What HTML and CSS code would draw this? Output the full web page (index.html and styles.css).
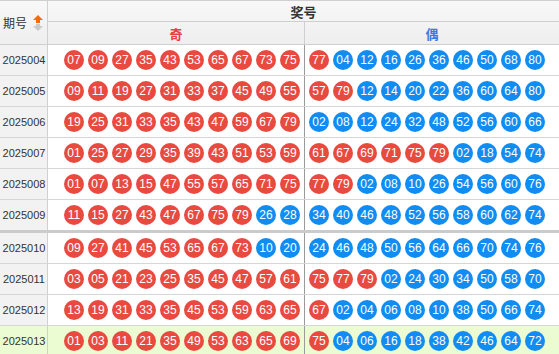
FILE: index.html
```html
<!DOCTYPE html>
<html lang="zh">
<head>
<meta charset="utf-8">
<title>奖号奇偶分布</title>
<link rel="stylesheet" href="styles.css">
</head>
<body>
<div class="tbl">
  <div class="head">
    <div class="h-period">期号
      <svg class="sort" width="10" height="16" viewBox="0 0 10 16">
        <polygon points="5,0 10,5 7,5 7,8 3,8 3,5 0,5" fill="#f36a10"/>
        <polygon points="3,9 7,9 7,11 10,11 5,16 0,11 3,11" fill="#c9c9c9"/>
      </svg>
    </div>
    <div class="h-prize">奖号</div>
    <div class="h-odd">奇</div>
    <div class="h-even">偶</div>
  </div>
  <div id="body"></div>
</div>
<script>
const data = [
  ["2025004","07 09 27 35 43 53 65 67 73 75","77 04 12 16 26 36 46 50 68 80"],
  ["2025005","09 11 19 27 31 33 37 45 49 55","57 79 12 14 20 22 36 60 64 80"],
  ["2025006","19 25 31 33 35 43 47 59 67 79","02 08 12 24 32 48 52 56 60 66"],
  ["2025007","01 25 27 29 35 39 43 51 53 59","61 67 69 71 75 79 02 18 54 74"],
  ["2025008","01 07 13 15 47 55 57 65 71 75","77 79 02 08 10 26 54 56 60 76"],
  ["2025009","11 15 27 43 47 67 75 79 26 28","34 40 46 48 52 56 58 60 62 74"],
  ["2025010","09 27 41 45 53 65 67 73 10 20","24 46 48 50 56 64 66 70 74 76"],
  ["2025011","03 05 21 23 25 35 45 47 57 61","75 77 79 02 24 30 34 50 58 70"],
  ["2025012","13 19 31 33 35 45 53 59 63 65","67 02 04 06 08 10 38 50 66 74"],
  ["2025013","01 03 11 21 35 49 53 63 65 69","75 04 06 16 18 38 42 46 64 72"]
];
const body = document.getElementById("body");
function balls(str){
  return str.split(" ").map(n => '<span class="ball ' + (parseInt(n,10)%2 ? 'red' : 'blue') + '">' + n + '</span>').join("");
}
data.forEach((r, i) => {
  const row = document.createElement("div");
  let cls = "row";
  if (r[0] === "2025009") cls += " split";
  if (i === data.length - 1) cls += " hl";
  row.className = cls;
  row.innerHTML = '<div class="period">' + r[0] + '</div><div class="cell odd">' + balls(r[1]) + '</div><div class="cell even">' + balls(r[2]) + '</div>';
  body.appendChild(row);
});
</script>
</body>
</html>
```

FILE: styles.css
```css
html, body {
  margin: 0;
  padding: 0;
  background: #fff;
}
body {
  font-family: "Liberation Sans", "Noto Sans CJK SC", sans-serif;
  color: #333;
  width: 559px;
  overflow: hidden;
}
.tbl {
  width: 559px;
}
.head {
  display: grid;
  grid-template-columns: 48px 257px 254px;
  grid-template-rows: 21px 23px;
  border-top: 1px solid #cfcfcf;
  background: linear-gradient(#f8f8f8, #eeeeee);
}
.h-period {
  grid-row: 1 / 3;
  grid-column: 1;
  box-sizing: border-box;
  border-right: 1px solid #cfcfcf;
  border-bottom: 1px solid #cfcfcf;
  display: flex;
  align-items: center;
  padding-left: 3px;
  font-family: "Noto Sans CJK SC", sans-serif;
  font-size: 12px;
  color: #333;
  gap: 6px;
}
.sort {
  display: block;
  margin-top: 1px;
}
.h-prize {
  grid-row: 1;
  grid-column: 2 / 4;
  box-sizing: border-box;
  border-bottom: 1px solid #cfcfcf;
  display: flex;
  align-items: center;
  justify-content: center;
  font-family: "Noto Sans CJK SC", sans-serif;
  font-weight: bold;
  font-size: 13px;
  color: #333;
  padding-top: 1px;
}
.h-odd, .h-even {
  grid-row: 2;
  box-sizing: border-box;
  border-bottom: 1px solid #cfcfcf;
  display: flex;
  align-items: center;
  justify-content: center;
  font-family: "Noto Sans CJK SC", sans-serif;
  font-weight: bold;
  font-size: 13px;
}
.h-odd {
  grid-column: 2;
  border-right: 1px solid #cfcfcf;
  color: #e8404a;
}
.h-even {
  grid-column: 3;
  color: #3f78e4;
}
.row {
  display: grid;
  grid-template-columns: 48px 257px 254px;
  height: 31px;
  box-sizing: border-box;
  border-bottom: 1px solid #d6d6d6;
}
.row.split {
  height: 33px;
  border-bottom: 3px solid #cbcbcb;
}
.row.hl {
  background: #ebfbd2;
}
.period {
  box-sizing: border-box;
  border-right: 1px solid #d0d0d0;
  background: #f2f2f2;
  display: flex;
  align-items: center;
  justify-content: center;
  font-size: 11px;
  color: #333;
  padding-left: 1px;
}
.row.hl .period {
  background: #ebfbd2;
}
.cell {
  display: flex;
  align-items: center;
  gap: 4px;
  box-sizing: border-box;
}
.cell.odd {
  padding-left: 16px;
  border-right: 1px solid #9a9a9a;
}
.cell.even {
  padding-left: 4px;
}
.ball {
  width: 20px;
  height: 20px;
  border-radius: 50%;
  display: flex;
  align-items: center;
  justify-content: center;
  color: #fff;
  font-size: 12px;
  line-height: 1;
  flex: none;
}
.ball.red {
  background: #e84a3f;
}
.ball.blue {
  background: #118cf2;
}
```
